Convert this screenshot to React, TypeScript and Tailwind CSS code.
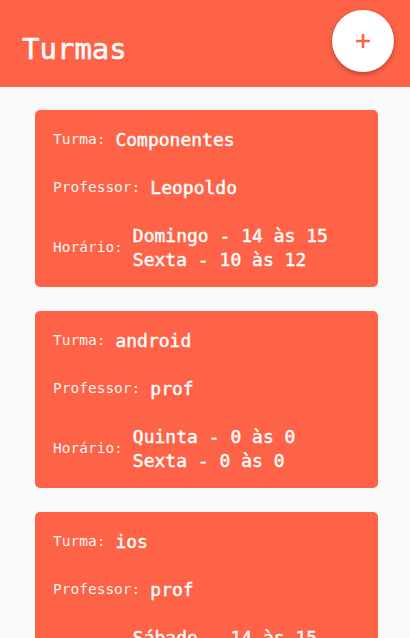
const turmas = [
  {
    nome: "Componentes",
    professor: "Leopoldo",
    horarios: ["Domingo - 14 às 15", "Sexta - 10 às 12"],
  },
  {
    nome: "android",
    professor: "prof",
    horarios: ["Quinta - 0 às 0", "Sexta - 0 às 0"],
  },
  {
    nome: "ios",
    professor: "prof",
    horarios: ["Sábado - 14 às 15", "Terça - 8 às 10"],
  },
];

const Row = ({ label, values }: { label: string; values: string[] }) => {
  return (
    <div className="flex flex-row items-center gap-[10px]">
      <span className="text-[14.5px] text-white/95">{label}</span>
      <div className="flex flex-col">
        {values.map((v) => (
          <span
            key={v}
            className="text-[18px] leading-[24px] text-white [-webkit-text-stroke:0.45px_white]"
          >
            {v}
          </span>
        ))}
      </div>
    </div>
  );
};

const TurmaCard = ({ turma }: { turma: (typeof turmas)[number] }) => {
  return (
    <div className="bg-[#ff6347] rounded-[5px] pl-[18px] pr-4 pt-[18px] pb-[15px] flex flex-col gap-6">
      <Row label="Turma:" values={[turma.nome]} />
      <Row label="Professor:" values={[turma.professor]} />
      <Row label="Horário:" values={turma.horarios} />
    </div>
  );
};

export default function App() {
  return (
    <div
      className="relative w-[410px] h-[638px] overflow-hidden bg-[#fafafa]"
      style={{ fontFamily: '"DejaVu Sans Mono", monospace' }}
    >
      <header className="h-[87px] bg-[#ff6347] flex items-center pl-[22px] pt-[12px]">
        <h1 className="text-[29px] text-white [-webkit-text-stroke:0.5px_white]">Turmas</h1>
      </header>

      <button className="absolute left-[332px] top-[10px] w-[62px] h-[62px] rounded-full bg-white shadow-[0_2px_5px_rgba(0,0,0,0.3)] flex items-center justify-center">
        <svg width="14" height="14" viewBox="0 0 14 14">
          <path d="M7 1v12M1 7h12" stroke="#ff6347" strokeWidth="2.6" strokeLinecap="round" />
        </svg>
      </button>

      <main className="flex flex-col gap-6 pt-[23px] pl-[35px] pr-[32px]">
        {turmas.map((t) => (
          <TurmaCard key={t.nome} turma={t} />
        ))}
      </main>
    </div>
  );
}
